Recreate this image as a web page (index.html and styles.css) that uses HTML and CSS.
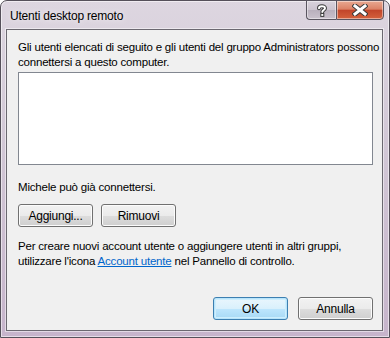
FILE: index.html
```html
<!DOCTYPE html>
<html lang="it">
<head>
    <meta charset="UTF-8">
    <title>Utenti desktop remoto</title>
    <link rel="stylesheet" href="styles.css">
</head>
<body>
    <div class="window">
        <div class="titlebar">
            <span class="title">Utenti desktop remoto</span>
            <div class="caption-buttons">
                <button class="cap help" aria-label="Guida">
                    <svg width="12" height="13" viewBox="0 0 12 13">
                        <path d="M3 4.2 C3 1.6 9 1.4 9 4.2 C9 6 6.3 6 6.3 8" fill="none" stroke="#3a3a3a" stroke-width="4" stroke-linecap="round"/>
                        <path d="M3 4.2 C3 1.6 9 1.4 9 4.2 C9 6 6.3 6 6.3 8" fill="none" stroke="#fff" stroke-width="2" stroke-linecap="round"/>
                        <rect x="4.8" y="9.4" width="3" height="3" fill="#fff" stroke="#3a3a3a" stroke-width="1"/>
                    </svg>
                </button>
                <button class="cap close" aria-label="Chiudi">
                    <svg width="16" height="12" viewBox="0 0 16 12">
                        <path d="M3 2 L13 10 M13 2 L3 10" stroke="#3a3a3a" stroke-width="5" stroke-linecap="square"/>
                        <path d="M3 2 L13 10 M13 2 L3 10" stroke="#fff" stroke-width="3" stroke-linecap="square"/>
                    </svg>
                </button>
            </div>
        </div>
        <div class="client">
            <p class="intro">Gli utenti elencati di seguito e gli utenti del gruppo Administrators possono<br>connettersi a questo computer.</p>
            <div class="userlist"></div>
            <p class="status">Michele può già connettersi.</p>
            <div class="row">
                <button class="btn">Aggiungi...</button>
                <button class="btn">Rimuovi</button>
            </div>
            <p class="hint">Per creare nuovi account utente o aggiungere utenti in altri gruppi,<br>utilizzare l'icona <a href="#">Account utente</a> nel Pannello di controllo.</p>
            <div class="footer">
                <button class="btn default">OK</button>
                <button class="btn">Annulla</button>
            </div>
        </div>
    </div>
</body>
</html>
```

FILE: styles.css
```css
body {
    margin: 0;
    font-family: "Liberation Sans", Arial, sans-serif;
    font-size: 11.5px;
    letter-spacing: -0.2px;
    background-color: #fff;
}
.window {
    width: 390px;
    height: 338px;
    box-sizing: border-box;
    display: flex;
    flex-direction: column;
    padding: 0 6px 6px 5px;
    border: 1px solid #55505a;
    border-radius: 7px 7px 0 0;
    background: linear-gradient(to bottom, #ddd6e0 0%, #d2c8d6 40%, #c6b4cb 100%);
    box-shadow: inset 0 0 0 1px rgba(255, 255, 255, 0.55);
}
.titlebar {
    height: 28px;
    display: flex;
    align-items: flex-start;
}
.title {
    padding: 8px 0 0 4px;
    font-size: 12px;
    color: #000;
    text-shadow: 0 0 6px rgba(255, 255, 255, 0.9);
}
.caption-buttons {
    margin-left: auto;
    margin-right: -1px;
    margin-top: -1px;
    display: flex;
}
.cap {
    height: 20px;
    padding: 0;
    border: 1px solid #5a5560;
    display: flex;
    justify-content: center;
    align-items: center;
    box-shadow: inset 0 0 0 1px rgba(255, 255, 255, 0.45);
}
.cap.help {
    width: 30px;
    border-right: none;
    border-radius: 0 0 0 4px;
    background: linear-gradient(to bottom, #d9d2dc 0%, #cbc3ce 50%, #b9b0bd 51%, #c9c1cc 100%);
}
.cap.close {
    width: 48px;
    border-radius: 0 0 4px 0;
    background: linear-gradient(to bottom, #e9a992 0%, #dc8266 45%, #c2452a 52%, #d4623d 100%);
}
.client {
    flex: 1;
    display: flex;
    flex-direction: column;
    background-color: #f0f0f0;
    border: 1px solid #6b6870;
    box-shadow: 0 0 0 1px rgba(255, 255, 255, 0.5);
    padding: 10px 9px 10px 11px;
    color: #000;
}
p {
    margin: 0;
    line-height: 15px;
    white-space: nowrap;
}
.userlist {
    margin-top: 2px;
    height: 91px;
    background-color: #fff;
    border: 1px solid #828790;
}
.status {
    margin-top: 15px;
}
.row {
    margin-top: 9px;
    display: flex;
    gap: 8px;
}
.hint {
    margin-top: 12px;
}
.hint a {
    color: #0066cc;
}
.footer {
    margin-top: auto;
    display: flex;
    justify-content: flex-end;
    gap: 10px;
}
.btn {
    width: 75px;
    height: 23px;
    padding: 0;
    font-family: inherit;
    font-size: 12px;
    letter-spacing: -0.25px;
    color: #000;
    border: 1px solid #707070;
    border-radius: 3px;
    background: linear-gradient(to bottom, #f2f2f2 0%, #ebebeb 50%, #dddddd 51%, #cfcfcf 100%);
    box-shadow: inset 0 0 0 1px #fcfcfc;
}
.btn.default {
    border-color: #3c7fb1;
    background: linear-gradient(to bottom, #eaf6fd 0%, #d9f0fc 50%, #bee6fd 51%, #a7d9f5 100%);
    box-shadow: inset 0 0 0 1px #b8e4fb, inset 0 0 0 2px #cdeefd;
}
```
